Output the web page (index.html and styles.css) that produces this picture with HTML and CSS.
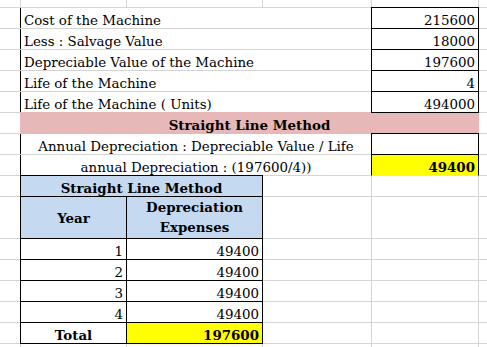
FILE: index.html
```html
<!DOCTYPE html>
<html>
<head>
<meta charset="utf-8">
<link rel="stylesheet" href="styles.css">
</head>
<body>
<div class="sheet">
  <!-- row 0 -->
  <div class="cell"></div><div class="cell"></div><div class="cell"></div><div class="cell"></div><div class="cell"></div><div class="cell"></div>
  <!-- rows 1-5 -->
  <div class="cell"></div><div class="cell bd edge">Cost of the Machine</div><div class="cell box num">215600</div><div class="cell"></div>
  <div class="cell"></div><div class="cell bd edge">Less : Salvage Value</div><div class="cell box num">18000</div><div class="cell"></div>
  <div class="cell"></div><div class="cell bd edge">Depreciable Value of the Machine</div><div class="cell box num">197600</div><div class="cell"></div>
  <div class="cell"></div><div class="cell bd edge">Life of the Machine</div><div class="cell box num">4</div><div class="cell"></div>
  <div class="cell"></div><div class="cell bd edge">Life of the Machine ( Units)</div><div class="cell box num">494000</div><div class="cell"></div>
  <!-- row 6 -->
  <div class="cell"></div><div class="cell be pink bold ctr">Straight Line Method</div><div class="cell"></div>
  <!-- rows 7-8 -->
  <div class="cell"></div><div class="cell bd edge ctr">Annual Depreciation : Depreciable Value / Life</div><div class="cell box"></div><div class="cell"></div>
  <div class="cell"></div><div class="cell bd edge ctr">annual Depreciation : (197600/4))</div><div class="cell box yellow open-bottom num bold">49400</div><div class="cell"></div>
  <!-- row 9 -->
  <div class="cell"></div><div class="cell bc box blue bold ctr">Straight Line Method</div><div class="cell"></div><div class="cell"></div><div class="cell"></div>
  <!-- row 10 -->
  <div class="cell"></div><div class="cell box blue bold ctr mid">Year</div><div class="cell box blue bold ctr wrap">Depreciation Expenses</div><div class="cell"></div><div class="cell"></div><div class="cell"></div>
  <!-- rows 11-14 -->
  <div class="cell"></div><div class="cell box num">1</div><div class="cell box num">49400</div><div class="cell"></div><div class="cell"></div><div class="cell"></div>
  <div class="cell"></div><div class="cell box num">2</div><div class="cell box num">49400</div><div class="cell"></div><div class="cell"></div><div class="cell"></div>
  <div class="cell"></div><div class="cell box num">3</div><div class="cell box num">49400</div><div class="cell"></div><div class="cell"></div><div class="cell"></div>
  <div class="cell"></div><div class="cell box num">4</div><div class="cell box num">49400</div><div class="cell"></div><div class="cell"></div><div class="cell"></div>
  <!-- row 15 -->
  <div class="cell"></div><div class="cell box bold ctr">Total</div><div class="cell box yellow num bold">197600</div><div class="cell"></div><div class="cell"></div><div class="cell"></div>
  <!-- row 16 -->
  <div class="cell"></div><div class="cell"></div><div class="cell"></div><div class="cell"></div><div class="cell"></div><div class="cell"></div>
</div>
</body>
</html>
```
FILE: styles.css
```css
html, body {
  margin: 0;
  padding: 0;
  background: #fff;
  overflow: hidden;
}

.sheet {
  display: grid;
  grid-template-columns: 20px 105px 135px 108px 106px 1fr;
  grid-template-rows: 7px repeat(9, 20px) 41px repeat(6, 20px);
  gap: 1px;
  width: 487px;
  height: 347px;
  overflow: hidden;
  background: #d4d4d4;
  font-family: "DejaVu Serif", serif;
  font-size: 13.4px;
  color: #000;
}

.cell {
  background: #fff;
  display: flex;
  align-items: flex-end;
  justify-content: flex-start;
  padding: 0 3px;
  white-space: nowrap;
  min-width: 0;
  line-height: normal;
}

.bd { grid-column: 2 / 5; }
.be { grid-column: 2 / 6; }
.bc { grid-column: 2 / 4; }

.edge {
  margin-left: -1px;
  border-left: 1px solid #000;
}

.box {
  margin: -1px;
  border: 1px solid #000;
  z-index: 1;
}

.open-bottom { border-bottom-color: #ffff00; }

.pink {
  background: #e6b8b7;
  margin: -1px;
  border: 1px solid #e6b8b7;
}

.blue { background: #c5d9f1; }
.yellow { background: #ffff00; }

.num { justify-content: flex-end; }
.ctr { justify-content: center; text-align: center; }
.bold { font-weight: bold; }
.mid { align-items: center; }

.wrap {
  white-space: normal;
  line-height: 20px;
  padding-bottom: 1px;
}
```
